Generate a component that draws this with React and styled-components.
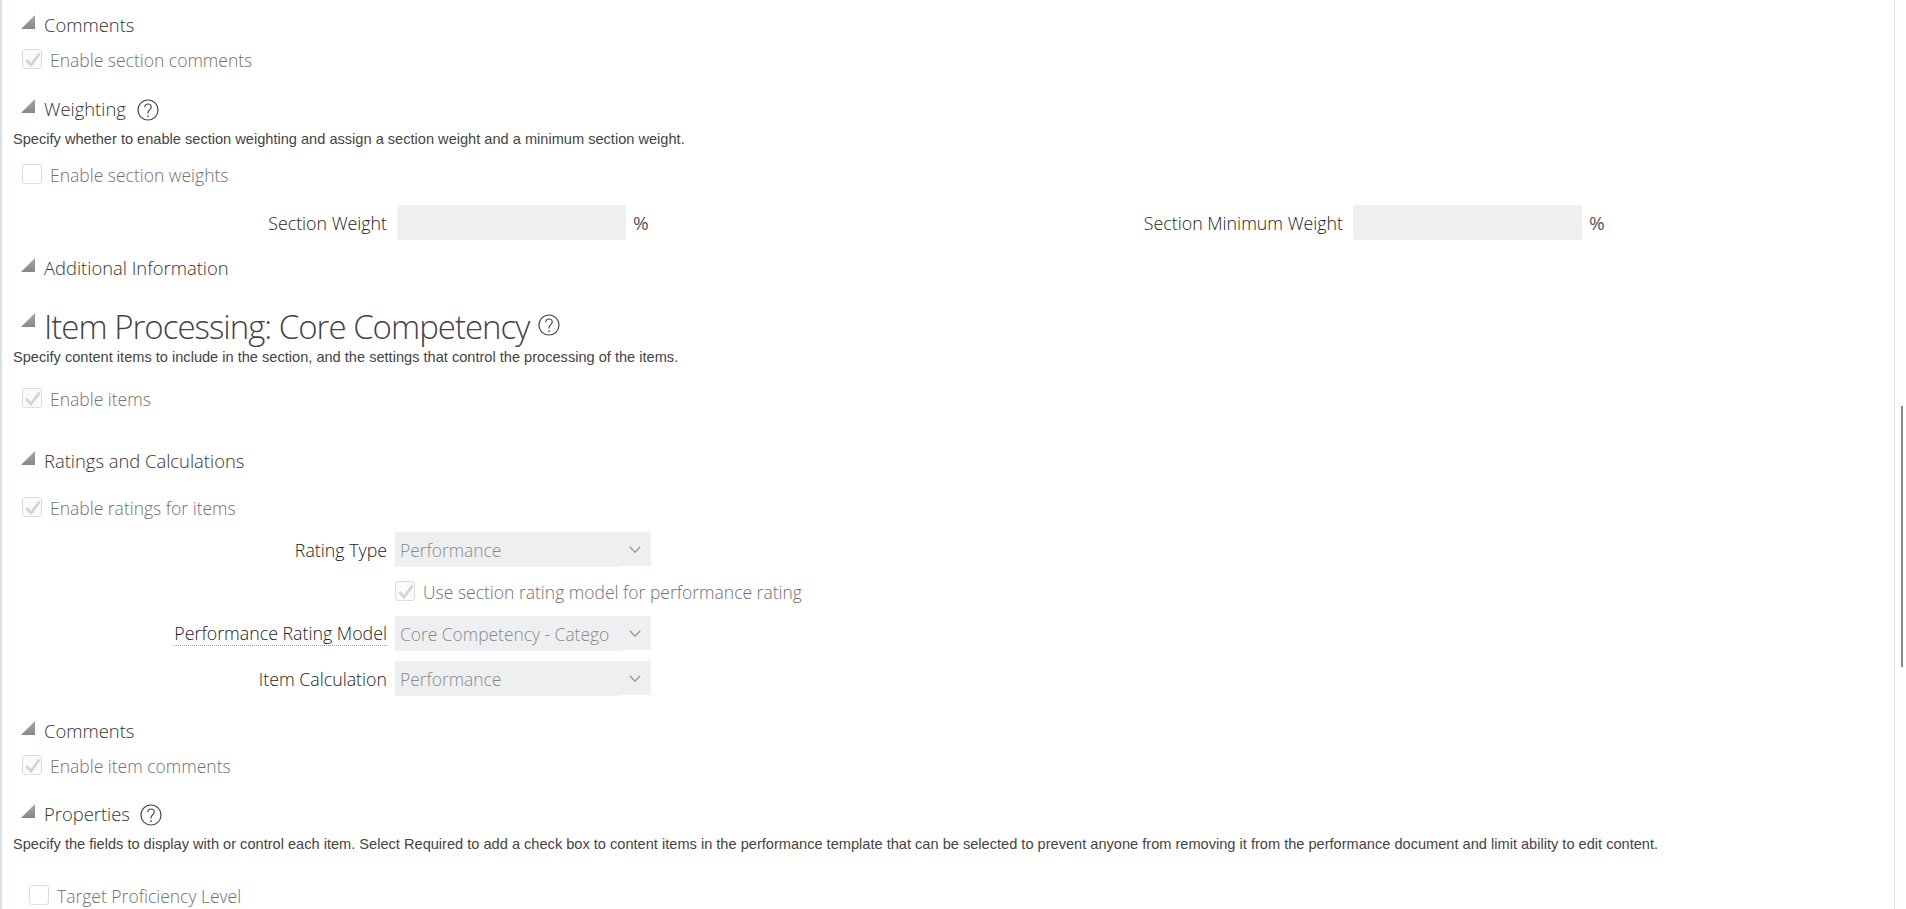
import React from 'react'
import styled, { createGlobalStyle } from 'styled-components'

const GlobalStyle = createGlobalStyle`
	html, body {
		margin: 0;
		padding: 0;
		height: 100%;
		overflow: hidden;
		background: #fff;
	}
`

const Triangle = () => (
	<TriangleSvg viewBox='0 0 14 14'>
		<defs>
			<linearGradient id='tri' x1='0' y1='0' x2='0' y2='1'>
				<stop offset='0' stopColor='#a4a8ab' />
				<stop offset='1' stopColor='#83888c' />
			</linearGradient>
		</defs>
		<polygon points='14,0 14,14 0,14' fill='url(#tri)' />
	</TriangleSvg>
)

const Help = () => (
	<HelpSvg viewBox='0 0 22 22' fill='none' stroke='#4a4a4a'>
		<circle cx='11' cy='11' r='10' strokeWidth='1.2' />
		<path d='M7.8 8.3c0-2 1.4-3.3 3.2-3.3s3.2 1.2 3.2 3c0 1.4-.8 2.1-1.7 2.9-.9.8-1.5 1.5-1.5 3v.6' strokeWidth='1.2' />
		<path d='M11 16.3v1.6' strokeWidth='1.3' />
	</HelpSvg>
)

const Chevron = () => (
	<svg width='12' height='7' viewBox='0 0 12 7' fill='none' stroke='#999' strokeWidth='1.4'>
		<path d='M.8.8L6 6.2 11.2.8' />
	</svg>
)

const Check = ({ checked, children, $top, $left }) => (
	<CheckRow $top={$top} $left={$left}>
		<Box $checked={checked}>
			{checked && (
				<svg width='15' height='15' viewBox='0 0 15 15' fill='none' stroke='#d4d4d4' strokeWidth='2.8'>
					<path d='M1.5 8l4.5 5 8.5-11.5' />
				</svg>
			)}
		</Box>
		<CheckLabel>{children}</CheckLabel>
	</CheckRow>
)

const Heading = ({ children, help, $top, $gap }) => (
	<HeadingRow $top={$top} $gap={$gap}>
		<Triangle />
		<HeadingText>{children}</HeadingText>
		{help && <Help />}
	</HeadingRow>
)

const Select = ({ value }) => (
	<SelectBox>
		<SelectText>{value}</SelectText>
		<SelectArrow><Chevron /></SelectArrow>
	</SelectBox>
)

export default function App() {
	return (
		<Page>
			<GlobalStyle />
			<Heading $top={0}>Comments</Heading>
			<Check checked $top={11}>Enable section comments</Check>

			<Heading help $top={29} $gap={11}>Weighting</Heading>
			<Description $top={9}>Specify whether to enable section weighting and assign a section weight and a minimum section weight.</Description>
			<Check $top={17}>Enable section weights</Check>

			<WeightGrid>
				<FieldRow>
					<FieldLabel>Section Weight</FieldLabel>
					<TextInput />
					<Percent>%</Percent>
				</FieldRow>
				<FieldRow>
					<FieldLabel>Section Minimum Weight</FieldLabel>
					<TextInput />
					<Percent>%</Percent>
				</FieldRow>
			</WeightGrid>

			<Heading $top={17}>Additional Information</Heading>

			<BigHeadingRow>
				<Triangle />
				<BigHeading>Item Processing: Core Competency</BigHeading>
				<Help />
			</BigHeadingRow>
			<Description>Specify content items to include in the section, and the settings that control the processing of the items.</Description>
			<Check checked $top={23}>Enable items</Check>

			<Heading $top={42}>Ratings and Calculations</Heading>
			<Check checked $top={23}>Enable ratings for items</Check>

			<FieldRow $top={15}>
				<FieldLabel>Rating Type</FieldLabel>
				<Select value='Performance' />
			</FieldRow>
			<Check checked $top={14} $left={395}>Use section rating model for performance rating</Check>
			<FieldRow $top={15}>
				<FieldLabel><Dotted>Performance Rating Model</Dotted></FieldLabel>
				<Select value='Core Competency - Catego' />
			</FieldRow>
			<FieldRow $top={10}>
				<FieldLabel>Item Calculation</FieldLabel>
				<Select value='Performance' />
			</FieldRow>

			<Heading $top={24}>Comments</Heading>
			<Check checked $top={11}>Enable item comments</Check>

			<Heading help $top={28} $gap={10}>Properties</Heading>
			<Description $top={9}>Specify the fields to display with or control each item. Select Required to add a check box to content items in the performance template that can be selected to prevent anyone from removing it from the performance document and limit ability to edit content.</Description>
			<Check $top={33} $left={29}>Target Proficiency Level</Check>
			<Thumb />
		</Page>
	)
}

const Page = styled.div`
	position: relative;
	box-sizing: border-box;
	width: 1895px;
	height: 909px;
	border-left: 2px solid #d6dfea;
	border-right: 1px solid #d6dfea;
	padding: 14px 0 0 11px;
	font-family: "Open Sans", "Noto Sans", sans-serif;
`

const TriangleSvg = styled.svg`
	width: 14px;
	height: 14px;
	margin-left: 8px;
	margin-top: -9px;
	flex: none;
`

const HelpSvg = styled.svg`
	width: 22px;
	height: 22px;
	flex: none;
`

const HeadingRow = styled.div`
	display: flex;
	align-items: center;
	height: 24px;
	margin-top: ${(p) => p.$top}px;
	svg:last-child {
		margin-left: ${(p) => p.$gap || 0}px;
		margin-top: -1px;
	}
	svg:first-child {
		margin-left: 8px;
		margin-top: -9px;
	}
`

const HeadingText = styled.div`
	margin-left: 9px;
	margin-top: -3px;
	font-size: 18.4px;
	font-weight: 300;
	color: #333;
	white-space: nowrap;
`

const BigHeadingRow = styled.div`
	display: flex;
	align-items: center;
	height: 44px;
	margin-top: 24px;
	svg:first-child {
		margin-top: -14px;
	}
	svg:last-child {
		margin-left: 9px;
		margin-top: -4px;
	}
`

const BigHeading = styled.div`
	margin-left: 9px;
	margin-top: -2px;
	font-size: 33px;
	font-weight: 300;
	letter-spacing: -1px;
	color: #444;
	white-space: nowrap;
`

const Description = styled.div`
	font-family: "Liberation Sans", Arial, sans-serif;
	font-size: 14.6px;
	line-height: 16px;
	height: 16px;
	margin-top: ${(p) => p.$top || 0}px;
	color: #444;
	white-space: nowrap;
`

const CheckRow = styled.div`
	display: flex;
	align-items: center;
	height: 20px;
	margin-top: ${(p) => p.$top}px;
	margin-left: ${(p) => (p.$left ? p.$left - 13 : 9)}px;
`

const Box = styled.div`
	box-sizing: border-box;
	width: 20px;
	height: 20px;
	flex: none;
	display: flex;
	align-items: center;
	justify-content: center;
	border: 1px solid #dcdcdc;
	border-radius: 3px;
	background: ${(p) => (p.$checked ? '#fafafa' : '#fff')};
`

const CheckLabel = styled.div`
	margin-left: 8px;
	padding-top: 2px;
	font-size: 17.5px;
	font-weight: 300;
	color: #707070;
	white-space: nowrap;
`

const WeightGrid = styled.div`
	display: grid;
	grid-template-columns: 956px 1fr;
	margin-top: 21px;
`

const FieldRow = styled.div`
	display: flex;
	align-items: center;
	margin-top: ${(p) => p.$top || 0}px;
`

const FieldLabel = styled.div`
	width: 374px;
	margin-right: 8px;
	flex: none;
	text-align: right;
	font-size: 17.8px;
	font-weight: 300;
	color: #222;
	white-space: nowrap;
`

const Dotted = styled.span`
	display: inline-block;
	line-height: 23px;
	border-bottom: 1px dotted #999;
`

const TextInput = styled.div`
	width: 229px;
	height: 35px;
	margin-left: 2px;
	background: #eeeff1;
	border-radius: 2px;
`

const Percent = styled.div`
	margin-left: 7px;
	font-size: 19px;
	color: #555;
`

const SelectBox = styled.div`
	display: flex;
	align-items: flex-start;
	width: 256px;
	height: 35px;
`

const SelectText = styled.div`
	box-sizing: border-box;
	width: 223px;
	height: 35px;
	padding-left: 5px;
	line-height: 37px;
	font-size: 17.4px;
	font-weight: 300;
	color: #8a8a8a;
	background: #eeeff1;
	white-space: nowrap;
	overflow: hidden;
`

const SelectArrow = styled.div`
	width: 33px;
	height: 34px;
	display: flex;
	align-items: center;
	justify-content: center;
	background: #eeeff1;
`

const Thumb = styled.div`
	position: absolute;
	right: -9px;
	top: 406px;
	width: 2px;
	height: 261px;
	background: #8a8a8a;
`
